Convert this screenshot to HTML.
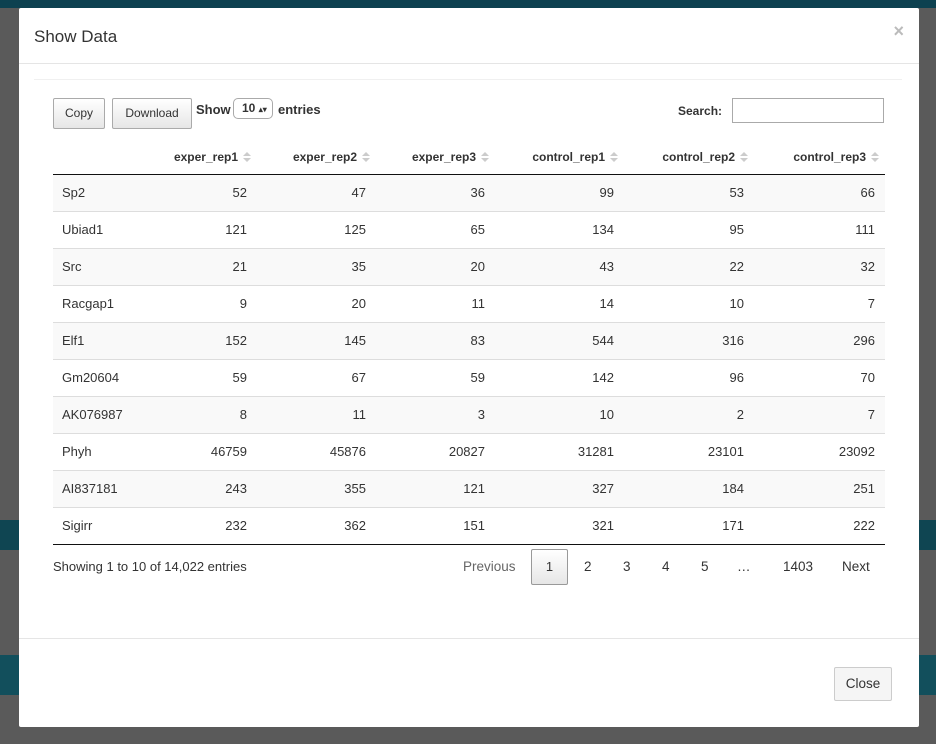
<!DOCTYPE html><html><head><style>
body{margin:0;width:936px;height:744px;overflow:hidden;background:#5a5a5a;font-family:"Liberation Sans",sans-serif;font-size:13px;color:#333;position:relative}
.abs{position:absolute}
.modal{left:19px;top:8px;width:900px;height:719px;background:#fff;border-radius:2px}
.btn{position:absolute;border:1px solid #aaa;border-radius:2px;background:linear-gradient(#fff,#e6e6e6);font-size:12px;text-align:center;box-sizing:border-box}
table{position:absolute;left:34px;top:132px;width:832px;border-collapse:collapse;table-layout:fixed}
th{height:34px;box-sizing:border-box;padding:0 19px 0 0;font-weight:bold;text-align:right;border-bottom:1px solid #111;font-size:12px;position:relative}
th.s::after{content:"";position:absolute;right:6px;top:12px;border:4px solid transparent;border-bottom:4px solid #ccc;border-top:none;}
th.s::before{content:"";position:absolute;right:6px;top:18px;border:4px solid transparent;border-top:4px solid #ccc;border-bottom:none}
td{height:36px;padding:0 10px 0 0;border-top:1px solid #ddd;text-align:right}
td:first-child{text-align:left;padding-left:9px}
tr.o td{background:#f9f9f9}
tbody tr:first-child td{border-top:none}
tbody tr:last-child td{border-bottom:1px solid #111}
.pg span{position:absolute;top:559px;font-size:13.5px}
</style></head><body>
<div class="abs" style="left:0;top:0;width:936px;height:8px;background:#0d4150"></div>
<div class="abs" style="left:0;top:520px;width:19px;height:30px;background:#0f4552"></div>
<div class="abs" style="left:919px;top:520px;width:17px;height:30px;background:#0f4552"></div>
<div class="abs" style="left:0;top:655px;width:19px;height:40px;background:#124f5c"></div>
<div class="abs" style="left:919px;top:655px;width:17px;height:40px;background:#124f5c"></div>
<div class="abs modal">
<div class="abs" style="left:15px;top:19px;font-size:17px">Show Data</div>
<div class="abs" style="right:15px;top:13px;font-size:18px;color:#bbb;font-weight:bold">×</div>
<div class="abs" style="left:0;top:55px;width:900px;height:1px;background:#e5e5e5"></div>
<div class="abs" style="left:15px;top:71px;width:868px;height:1px;background:#f0f0f0"></div>
<div class="btn" style="left:34px;top:90px;width:52px;height:31px;line-height:29px">Copy</div>
<div class="btn" style="left:93px;top:90px;width:80px;height:31px;line-height:29px">Download</div>
<div class="abs" style="left:177px;top:94px;font-weight:bold">Show</div>
<div class="abs" style="left:214px;top:90px;width:40px;height:21px;border:1px solid #aaa;border-radius:5px;box-sizing:border-box;font-weight:bold;font-size:12px;line-height:19px;padding-left:8px">10 <span style="font-size:8px">▴▾</span></div>
<div class="abs" style="left:259px;top:94px;font-weight:bold">entries</div>
<div class="abs" style="left:659px;top:96px;font-weight:bold;font-size:12px">Search:</div>
<div class="abs" style="left:713px;top:90px;width:152px;height:25px;border:1px solid #aaa;box-sizing:border-box"></div>
<table><colgroup><col style="width:85px"><col style="width:119px"><col style="width:119px"><col style="width:119px"><col style="width:129px"><col style="width:130px"><col style="width:131px"></colgroup>
<thead><tr><th></th><th class="s">exper_rep1</th><th class="s">exper_rep2</th><th class="s">exper_rep3</th><th class="s">control_rep1</th><th class="s">control_rep2</th><th class="s">control_rep3</th></tr></thead>
<tbody>
<tr class="o"><td>Sp2</td><td>52</td><td>47</td><td>36</td><td>99</td><td>53</td><td>66</td></tr>
<tr><td>Ubiad1</td><td>121</td><td>125</td><td>65</td><td>134</td><td>95</td><td>111</td></tr>
<tr class="o"><td>Src</td><td>21</td><td>35</td><td>20</td><td>43</td><td>22</td><td>32</td></tr>
<tr><td>Racgap1</td><td>9</td><td>20</td><td>11</td><td>14</td><td>10</td><td>7</td></tr>
<tr class="o"><td>Elf1</td><td>152</td><td>145</td><td>83</td><td>544</td><td>316</td><td>296</td></tr>
<tr><td>Gm20604</td><td>59</td><td>67</td><td>59</td><td>142</td><td>96</td><td>70</td></tr>
<tr class="o"><td>AK076987</td><td>8</td><td>11</td><td>3</td><td>10</td><td>2</td><td>7</td></tr>
<tr><td>Phyh</td><td>46759</td><td>45876</td><td>20827</td><td>31281</td><td>23101</td><td>23092</td></tr>
<tr class="o"><td>AI837181</td><td>243</td><td>355</td><td>121</td><td>327</td><td>184</td><td>251</td></tr>
<tr><td>Sigirr</td><td>232</td><td>362</td><td>151</td><td>321</td><td>171</td><td>222</td></tr>
</tbody></table>
<div class="abs" style="left:34px;top:551px">Showing 1 to 10 of 14,022 entries</div>
<div class="btn" style="left:512px;top:541px;width:37px;height:36px;line-height:34px;font-size:13px;border-color:#999">1</div>
</div>
<div class="pg"><span style="left:463px;color:#666">Previous</span><span style="left:584px">2</span><span style="left:623px">3</span><span style="left:662px">4</span><span style="left:701px">5</span><span style="left:737px">…</span><span style="left:783px">1403</span><span style="left:842px">Next</span></div>
<div class="abs" style="left:19px;top:638px;width:900px;height:1px;background:#e5e5e5"></div>
<div class="btn" style="left:834px;top:667px;width:58px;height:34px;line-height:32px;font-size:13.5px;border-color:#ccc;background:#f5f5f5">Close</div>
</body></html>
